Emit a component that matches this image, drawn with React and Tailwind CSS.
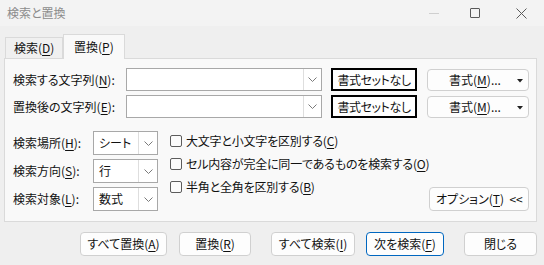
import React from "react";

const font = "font-['Noto_Sans_CJK_JP','Noto_Sans',sans-serif] [font-feature-settings:'palt']";

function U({ children }) {
  return <span className="underline underline-offset-2 decoration-1">{children}</span>;
}

function Chevron() {
  return (
    <svg width="9" height="5" viewBox="0 0 9 5" fill="none">
      <path d="M0.5 0.5 L4.5 4.5 L8.5 0.5" stroke="#7a7a7a" strokeWidth="1" />
    </svg>
  );
}

function TextCombo() {
  return (
    <div className="flex h-[23px] w-[196px] border border-[#a8a8a8] bg-white">
      <div className="flex-1" />
      <div className="flex w-[18px] items-center justify-center border-l border-[#dedede]">
        <Chevron />
      </div>
    </div>
  );
}

function SmallCombo({ value }) {
  return (
    <div className="flex h-[24px] w-[65px] border border-[#a8a8a8] bg-white">
      <div className="flex flex-1 items-center pl-[5px] text-[12px] text-[#111]">{value}</div>
      <div className="flex w-[19px] items-center justify-center border-l border-[#dedede]">
        <Chevron />
      </div>
    </div>
  );
}

function Check({ children }) {
  return (
    <div className="flex items-center gap-[4px] whitespace-nowrap">
      <div className="h-[12px] w-[12px] shrink-0 rounded-[2px] border border-[#5c5c5c] bg-[#fbfbfb]" />
      <span className="text-[12px] tracking-[-0.2px] text-[#111]">{children}</span>
    </div>
  );
}

function Btn({ children, w, primary }) {
  return (
    <div
      className={`flex h-[24px] items-center justify-center whitespace-nowrap rounded-[4px] border bg-[#fdfdfd] text-[12px] text-[#111] ${
        primary ? "border-[#0067c0]" : "border-[#d0d0d0]"
      } ${w}`}
    >
      {children}
    </div>
  );
}

function FormatRow({ label }) {
  return (
    <div className="flex items-center">
      <div className="w-[113px] whitespace-nowrap text-[12px] text-[#111]">{label}</div>
      <TextCombo />
      <div className="ml-[9px] flex h-[23px] w-[86px] items-center justify-center whitespace-nowrap border-2 border-black bg-white text-[12px] tracking-[-0.4px] text-[#111]">
        書式セットなし
      </div>
      <div className="relative ml-[10px] flex h-[22px] w-[102px] items-center justify-center rounded-[4px] border border-[#d0d0d0] bg-[#fdfdfd] text-[12px] text-[#111]">
        <span className="-ml-[6px] whitespace-nowrap">
          書式(<U>M</U>)...
        </span>
        <svg width="6" height="4" viewBox="0 0 6 4" className="absolute right-[5px] top-[9px]">
          <path d="M0 0 L6 0 L3 3.5 Z" fill="#222" />
        </svg>
      </div>
    </div>
  );
}

export default function App() {
  return (
    <div className={`relative h-[265px] w-[544px] overflow-hidden bg-[#efefef] ${font}`}>
      {/* タイトルバー */}
      <div className="flex h-[26px] items-center bg-[#f3f3f3] pl-[7px]">
        <span className="text-[12px] text-[#8c8c8c]">検索と置換</span>
        <div className="ml-auto flex h-full items-center">
          <div className="mr-[31px] h-px w-[10px] bg-[#cfcfcf]" />
          <div className="mr-[36px] h-[10px] w-[10px] rounded-[1px] border border-[#5a5a5a]" />
          <svg width="11" height="11" viewBox="0 0 11 11" className="mr-[17px]">
            <path d="M0.5 0.5 L10.5 10.5 M10.5 0.5 L0.5 10.5" stroke="#5a5a5a" strokeWidth="1" />
          </svg>
        </div>
      </div>

      {/* タブ */}
      <div className="mt-[8px] flex items-end pl-[5px]">
        <div className="flex h-[21px] w-[58px] items-center border border-b-0 border-[#dadada] bg-[#f0f0f0] pl-[8px] text-[12px] text-[#111]">
          検索(<U>D</U>)
        </div>
        <div className="relative z-10 -mb-px flex h-[25px] w-[62px] items-center border border-b-0 border-[#dadada] bg-[#f9f9f9] pl-[10px] text-[12px] text-[#111]">
          置換(<U>P</U>)
        </div>
      </div>

      {/* パネル */}
      <div className="ml-[4px] flex h-[164px] w-[533px] flex-col border border-[#dadada] bg-[#f9f9f9] pl-[8px] pt-[9px]">
        <div className="flex flex-col gap-[4px]">
          <FormatRow label={<>検索する文字列(<U>N</U>):</>} />
          <FormatRow label={<>置換後の文字列(<U>E</U>):</>} />
        </div>

        <div className="mt-[13px] flex">
          <div className="flex flex-col gap-[4px]">
            <div className="flex items-center">
              <div className="w-[80px] whitespace-nowrap text-[12px] text-[#111]">検索場所(<U>H</U>):</div>
              <SmallCombo value="シート" />
            </div>
            <div className="flex items-center">
              <div className="w-[80px] whitespace-nowrap text-[12px] text-[#111]">検索方向(<U>S</U>):</div>
              <SmallCombo value="行" />
            </div>
            <div className="flex items-center">
              <div className="w-[80px] whitespace-nowrap text-[12px] text-[#111]">検索対象(<U>L</U>):</div>
              <SmallCombo value="数式" />
            </div>
          </div>
          <div className="ml-[12px] flex flex-col gap-[5px] pt-[1px]">
            <Check>大文字と小文字を区別する(<U>C</U>)</Check>
            <Check>セル内容が完全に同一であるものを検索する(<U>O</U>)</Check>
            <Check>半角と全角を区別する(<U>B</U>)</Check>
          </div>
          <div className="ml-auto mr-[8px] flex items-end">
            <div className="flex h-[24px] w-[100px] items-center justify-center whitespace-nowrap rounded-[4px] border border-[#d0d0d0] bg-[#fdfdfd] text-[12px] text-[#111]">
              オプション(<U>T</U>)&nbsp;&nbsp;&lt;&lt;
            </div>
          </div>
        </div>
      </div>

      {/* 下部ボタン */}
      <div className="mt-[10px] flex pl-[80px]">
        <Btn w="w-[87px]">すべて置換(<U>A</U>)</Btn>
        <div className="ml-[12px]">
          <Btn w="w-[72px]">置換(<U>R</U>)</Btn>
        </div>
        <div className="ml-[20px]">
          <Btn w="w-[84px]">すべて検索(<U>I</U>)</Btn>
        </div>
        <div className="ml-[11px]">
          <Btn w="w-[78px]" primary>次を検索(<U>F</U>)</Btn>
        </div>
        <div className="ml-[20px]">
          <Btn w="w-[73px]">閉じる</Btn>
        </div>
      </div>
    </div>
  );
}
